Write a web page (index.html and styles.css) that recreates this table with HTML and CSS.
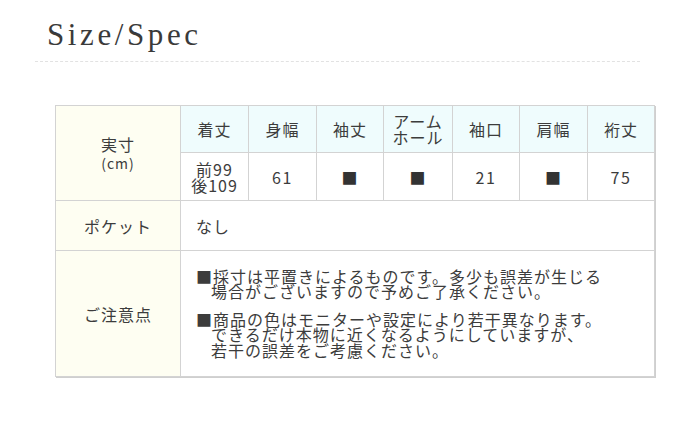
FILE: index.html
```html
<!DOCTYPE html>
<html lang="ja">
<head>
<meta charset="utf-8">
<link rel="stylesheet" href="styles.css">
</head>
<body>
<div class="page">
  <h1 class="title">Size/Spec</h1>
  <div class="rule"></div>
  <table class="spec">
    <colgroup>
      <col class="c-head">
      <col class="c1"><col class="c2"><col class="c3"><col class="c4"><col class="c5"><col class="c6"><col class="c7">
    </colgroup>
    <tr class="r-head">
      <th class="side" rowspan="2">実寸<br><span class="unit">(cm)</span></th>
      <td class="hd">着丈</td>
      <td class="hd">身幅</td>
      <td class="hd">袖丈</td>
      <td class="hd tight">アーム<br>ホール</td>
      <td class="hd">袖口</td>
      <td class="hd">肩幅</td>
      <td class="hd">裄丈</td>
    </tr>
    <tr class="r-data">
      <td class="tight">前99<br>後109</td>
      <td class="num">61</td>
      <td class="sq">■</td>
      <td class="sq">■</td>
      <td class="num">21</td>
      <td class="sq">■</td>
      <td class="num">75</td>
    </tr>
    <tr class="r-pocket">
      <th class="side">ポケット</th>
      <td class="left" colspan="7">なし</td>
    </tr>
    <tr class="r-notes">
      <th class="side">ご注意点</th>
      <td class="left notes" colspan="7">
        <p>■採寸は平置きによるものです。多少も誤差が生じる<br><span class="ind">場合がございますので予めご了承ください。</span></p>
        <p>■商品の色はモニターや設定により若干異なります。<br><span class="ind">できるだけ本物に近くなるようにしていますが、</span><br><span class="ind">若干の誤差をご考慮ください。</span></p>
      </td>
    </tr>
  </table>
</div>
</body>
</html>
```

FILE: styles.css
```css
html, body {
  margin: 0;
  padding: 0;
  background: #ffffff;
}
.page {
  width: 700px;
  height: 425px;
  padding-top: 16px;
  box-sizing: border-box;
}
.title {
  margin: 0 0 0 47px;
  font-family: "Liberation Serif", "DejaVu Serif", serif;
  font-weight: normal;
  font-size: 31px;
  line-height: 38px;
  letter-spacing: 3.6px;
  color: #3a3a3a;
}
.rule {
  margin: 7px 60px 0 35px;
  border-top: 1px dashed #e2e2e2;
  height: 0;
}
.spec {
  margin: 43px 0 0 55px;
  border-collapse: collapse;
  table-layout: fixed;
  width: 600px;
  font-family: "Noto Sans CJK JP", "Noto Sans", sans-serif;
  font-size: 16px;
  letter-spacing: 1px;
  color: #3c3c3c;
  box-shadow: 1px 1px 0 #cfcfcf;
}
.c-head { width: 125px; }
.c1 { width: 68px; }
.c2 { width: 68px; }
.c3 { width: 67px; }
.c4 { width: 69px; }
.c5 { width: 67px; }
.c6 { width: 68px; }
.c7 { width: 67px; }
.spec th, .spec td {
  border: 1px solid #d3d3d3;
  padding: 0;
  text-align: center;
  vertical-align: middle;
  font-weight: normal;
  line-height: 18px;
}
.side {
  background: #fefef2;
}
.unit {
  font-size: 14px;
  letter-spacing: 1px;
}
.hd {
  background: #effcfd;
}
.tight {
  line-height: 16px !important;
}
.num {
  letter-spacing: 1.5px;
}
.sq {
  color: #333333;
}
.r-head { height: 47px; }
.r-data { height: 48px; }
.r-pocket { height: 50px; }
.r-notes { height: 126px; }
.left {
  text-align: left !important;
  padding-left: 15px !important;
}
.notes p {
  margin: 0;
  line-height: 15.5px;
}
.notes p + p {
  margin-top: 12px;
}
.ind {
  padding-left: 15px;
}
```
